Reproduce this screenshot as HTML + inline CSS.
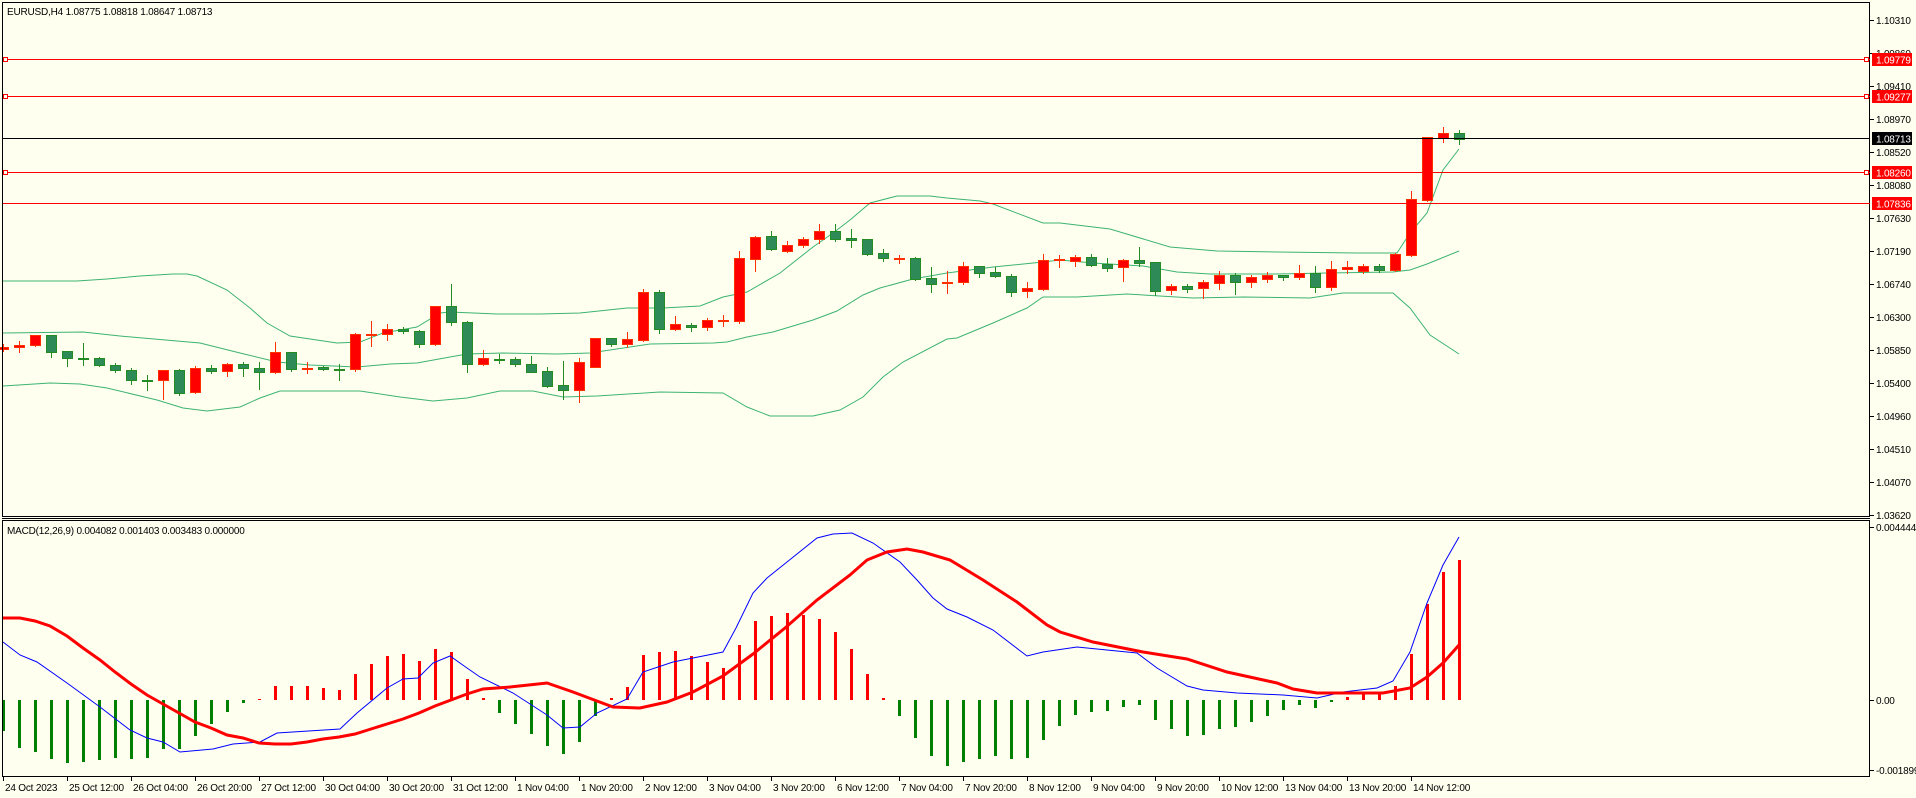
<!DOCTYPE html>
<html><head><meta charset="utf-8"><style>
html,body{margin:0;padding:0;background:#fffff0;}
svg{display:block;font-family:"Liberation Sans",Arial,sans-serif;font-size:10px;letter-spacing:-0.2px;}
</style></head><body>
<svg id="s" width="1916" height="798" viewBox="0 0 1916 798" xmlns="http://www.w3.org/2000/svg">
<rect width="1916" height="798" fill="#fffff0"/>
<g id="g"></g>
<rect x="2.5" y="2.5" width="1867" height="514" fill="none" stroke="#000"/>
<line x1="2" y1="518.5" x2="1870" y2="518.5" stroke="#000"/>
<rect x="2.5" y="520.5" width="1867" height="256" fill="none" stroke="#000"/>
<line x1="3" y1="59.5" x2="1870" y2="59.5" stroke="#f00"/>
<line x1="3" y1="96.5" x2="1870" y2="96.5" stroke="#f00"/>
<line x1="3" y1="138.5" x2="1870" y2="138.5" stroke="#000"/>
<line x1="3" y1="172.5" x2="1870" y2="172.5" stroke="#f00"/>
<line x1="3" y1="203.5" x2="1870" y2="203.5" stroke="#f00"/>
<g fill="#fffff0" stroke="#f00">
<rect x="3.5" y="57.5" width="4" height="4"/><rect x="1864.5" y="57.5" width="4" height="4"/>
<rect x="3.5" y="94.5" width="4" height="4"/><rect x="1864.5" y="94.5" width="4" height="4"/>
<rect x="3.5" y="170.5" width="4" height="4"/><rect x="1864.5" y="170.5" width="4" height="4"/>
</g>
<text x="7" y="15" fill="#000">EURUSD,H4  1.08775 1.08818 1.08647 1.08713</text>
<text x="7" y="534" fill="#000">MACD(12,26,9) 0.004082 0.001403 0.003483 0.000000</text>
<g id="yl" fill="#000">
<text x="1876" y="24">1.10310</text>
<text x="1876" y="57">1.09860</text>
<text x="1876" y="90">1.09410</text>
<text x="1876" y="123">1.08970</text>
<text x="1876" y="156">1.08520</text>
<text x="1876" y="189">1.08080</text>
<text x="1876" y="222">1.07630</text>
<text x="1876" y="255">1.07190</text>
<text x="1876" y="288">1.06740</text>
<text x="1876" y="321">1.06300</text>
<text x="1876" y="354">1.05850</text>
<text x="1876" y="387">1.05400</text>
<text x="1876" y="420">1.04960</text>
<text x="1876" y="453">1.04510</text>
<text x="1876" y="486">1.04070</text>
<text x="1876" y="519">1.03620</text>
</g>
<rect x="1872" y="53" width="40" height="13" fill="#f00"/><text x="1876" y="63.5" fill="#fff">1.09779</text>
<rect x="1872" y="90" width="40" height="13" fill="#f00"/><text x="1876" y="100.5" fill="#fff">1.09277</text>
<rect x="1872" y="132" width="40" height="13" fill="#000"/><text x="1876" y="142.5" fill="#fff">1.08713</text>
<rect x="1872" y="166" width="40" height="13" fill="#f00"/><text x="1876" y="176.5" fill="#fff">1.08260</text>
<rect x="1872" y="197" width="40" height="13" fill="#f00"/><text x="1876" y="207.5" fill="#fff">1.07836</text>
<line x1="1870" y1="527.5" x2="1874" y2="527.5" stroke="#000"/><text x="1876" y="531">0.004444</text>
<line x1="1870" y1="700.5" x2="1874" y2="700.5" stroke="#000"/><text x="1876" y="704">0.00</text>
<line x1="1870" y1="770.5" x2="1874" y2="770.5" stroke="#000"/><text x="1876" y="774">-0.001899</text>
<g fill="#000">
<text x="5" y="791">24 Oct 2023</text>
<text x="69" y="791">25 Oct 12:00</text>
<text x="133" y="791">26 Oct 04:00</text>
<text x="197" y="791">26 Oct 20:00</text>
<text x="261" y="791">27 Oct 12:00</text>
<text x="325" y="791">30 Oct 04:00</text>
<text x="389" y="791">30 Oct 20:00</text>
<text x="453" y="791">31 Oct 12:00</text>
<text x="517" y="791">1 Nov 04:00</text>
<text x="581" y="791">1 Nov 20:00</text>
<text x="645" y="791">2 Nov 12:00</text>
<text x="709" y="791">3 Nov 04:00</text>
<text x="773" y="791">3 Nov 20:00</text>
<text x="837" y="791">6 Nov 12:00</text>
<text x="901" y="791">7 Nov 04:00</text>
<text x="965" y="791">7 Nov 20:00</text>
<text x="1029" y="791">8 Nov 12:00</text>
<text x="1093" y="791">9 Nov 04:00</text>
<text x="1157" y="791">9 Nov 20:00</text>
<text x="1221" y="791">10 Nov 12:00</text>
<text x="1285" y="791">13 Nov 04:00</text>
<text x="1349" y="791">13 Nov 20:00</text>
<text x="1413" y="791">14 Nov 12:00</text>
</g>
</svg>
<script>
(function(){
var NS="http://www.w3.org/2000/svg",g=document.getElementById("g");
function el(n,a){var e=document.createElementNS(NS,n);for(var k in a)e.setAttribute(k,a[k]);g.appendChild(e);return e;}
function pl(pts,st,w){el("polyline",{points:pts.map(function(p){return p[0]+","+p[1]}).join(" "),fill:"none",stroke:st,"stroke-width":w});}
for(var k=0;k<16;k++){el("line",{x1:1870,x2:1874,y1:20.5+33*k,y2:20.5+33*k,stroke:"#000"});}
for(var k=0;k<23;k++){var x=3.5+64*k;el("line",{x1:x,x2:x,y1:777,y2:781,stroke:"#000"});}
pl([[3,281],[77,281],[107,279],[140,276],[173,274],[187,274],[197,276],[227,290],[250,308],[267,323],[290,336],[337,343],[360,342],[383,333],[417,327],[440,313],[450,312],[497,314],[540,314],[580,313],[627,308],[633,308],[663,308],[700,306],[723,297],[747,292],[780,273],[813,247],[833,233],[850,220],[870,203],[897,196],[930,196],[947,198],[980,201],[993,204],[1043,223],[1060,223],[1110,229],[1170,247],[1217,251],[1277,252],[1357,253],[1397,253],[1410,233],[1427,213],[1443,170],[1459,149]],"#3cb371",1);
pl([[3,333],[83,332],[120,336],[177,341],[200,343],[240,353],[277,362],[310,365],[357,367],[390,364],[417,363],[450,357],[467,354],[503,353],[557,354],[590,353],[650,344],[713,343],[727,342],[747,337],[773,332],[813,320],[837,311],[863,295],[880,288],[913,279],[947,273],[993,267],[1043,262],[1060,260],[1093,263],[1143,266],[1177,272],[1210,274],[1277,274],[1327,273],[1393,272],[1410,270],[1427,264],[1459,251]],"#3cb371",1);
pl([[3,386],[50,383],[80,384],[107,388],[157,400],[183,408],[207,411],[240,407],[260,398],[280,391],[360,391],[400,397],[433,401],[467,398],[500,391],[533,391],[563,397],[597,396],[660,392],[723,393],[747,407],[770,416],[813,416],[840,410],[863,397],[883,377],[903,362],[947,339],[957,338],[993,323],[1027,308],[1043,297],[1077,297],[1127,294],[1193,298],[1243,297],[1310,298],[1343,293],[1393,293],[1410,308],[1430,335],[1459,354]],"#3cb371",1);
var A="r 502 508 492 512|r 496 501 483 515|r 466 496 466 499|g 466 515 466 530|g 514 535 514 557|g 535 536 489 554|g 535 556 531 559|g 556 571 549 575|g 571 601 565 611|g 600 602 586 629|r 571 601 571 656|g 571 640 568 646|r 565 637 558 640|g 565 574 556 578|r 552 574 549 587|g 552 565 546 587|g 565 577 546 626|r 517 577 486 580|g 517 568 517 574|r 563 565 546 580|g 562 568 558 571|g 567 569 552 599|r 463 568 459 572|r 463 466 423 499|r 448 463 432 479|g 448 454 441 460|g 454 493 450 502|r 379 493 379 496|g 379 427 312 434|g 427 553 424 575|r 535 553 511 556|g 536 539 522 550|g 538 553 531 557|g 553 575 528 575|g 574 617 562 620|g 616 629 543 656|r 547 629 534 665|r 475 562 475 562|g 475 491 475 497|r 478 491 457 500|r 337 479 327 482|g 337 446 330 458|r 433 446 408 449|g 436 440 430 452|r 421 440 414 449|r 420 422 405 437|r 235 422 213 428|r 172 238 168 272|g 169 206 153 209|r 195 212 184 215|r 178 196 172 200|r 154 178 132 188|g 154 176 132 182|g 175 179 147 200|g 178 221 178 224|g 220 235 208 242|r 235 237 226 248|g 235 297 232 300|g 295 311 261 335|r 307 310 272 338";
var B="r 439 487 426 491|g 439 458 439 470|g 457 469 440 470|g 468 515 462 527|r 505 514 487 530|r 421 506 402 510|r 418 420 405 440|r 412 422 405 437|g 412 434 402 437|g 432 443 414 452|r 421 442 417 482|g 421 428 381 438|g 427 512 427 525|r 499 511 492 521|g 499 506 492 515|r 487 505 480 535|r 464 488 452 506|g 464 485 460 521|r 472 485 465 500|r 465 476 457 486|g 465 470 465 479|r 460 470 435 476|g 460 500 438 515|r 448 500 423 510|r 441 446 423 460|r 438 452 432 459|g 438 449 432 457|r 403 449 400 453|r 238 404 213 407|r 52 239 52 242|r 40 53 21 66|g 40 56 30 72";
var list=[];A.split("|").forEach(function(s){list.push([s,180]);});B.split("|").forEach(function(s){list.push([s,120]);});
list.forEach(function(it,i){var p=it[0].split(" "),o=it[1],c=p[0];
 var bt=Math.round(o+(+p[1])/3),bb=Math.round(o+(+p[2])/3),wt=Math.round(o+(+p[3])/3),wb=Math.round(o+(+p[4])/3);
 var x=3+16*i,st=c=="r"?"#ff3000":"#228b22",fi=c=="r"?"#ff0000":"#2e8b57";
 el("line",{x1:x+0.5,x2:x+0.5,y1:wt,y2:wb+1,stroke:st});
 if(bb-bt<2){el("rect",{x:x-5,y:bt,width:11,height:Math.max(1,bb-bt)+1,fill:st});}
 else el("rect",{x:x-4.5,y:bt+0.5,width:10,height:bb-bt,fill:fi,stroke:st});
});
var H=[731,748,752,759,763,762,760,758,759,758,749,749,736,724,712,703,699,686,686,686,688,690,674,664,656,654,661,649,652,679,698,713,724,734,746,754,742,716,698,687,655,652,651,656,662,668,645,621,616,613,615,619,632,649,674,698,716,738,756,766,762,759,756,759,758,740,726,715,712,711,707,705,720,729,736,735,729,727,722,716,710,705,708,702,697,694,693,686,654,604,572,560];
H.forEach(function(v,i){var x=3+16*i;if(v<700){el("rect",{x:x-1,y:v,width:3,height:700-v,fill:"#f00"});}else{el("rect",{x:x-1,y:700,width:3,height:v-700,fill:"#008000"});}});
pl([[3,642],[20,655],[37,662],[67,683],[100,707],[130,730],[147,738],[163,742],[180,752],[213,749],[233,744],[260,742],[277,733],[340,729],[357,713],[387,688],[403,679],[418,678],[433,663],[450,656],[467,668],[480,677],[513,693],[547,715],[563,728],[580,727],[597,713],[627,699],[643,672],[673,662],[723,652],[736,628],[753,593],[767,578],[787,562],[817,538],[833,534],[852,533],[873,543],[900,562],[917,580],[933,598],[947,609],[967,617],[993,630],[1027,656],[1043,652],[1077,647],[1137,653],[1157,668],[1187,686],[1203,690],[1237,693],[1283,695],[1317,698],[1343,692],[1377,688],[1393,681],[1410,652],[1427,603],[1443,565],[1459,537]],"#0000ff",1);
pl([[3,618],[20,618],[35,621],[50,626],[67,636],[83,648],[100,660],[115,672],[131,684],[147,695],[163,704],[179,713],[195,722],[211,728],[227,735],[243,738],[259,743],[275,744],[291,744],[307,742],[323,739],[339,737],[355,734],[371,729],[387,724],[403,719],[419,713],[435,706],[451,700],[467,694],[483,689],[510,687],[547,683],[573,692],[613,707],[640,708],[667,702],[693,692],[723,676],[753,654],[785,628],[817,600],[850,575],[867,560],[887,552],[907,549],[923,552],[950,560],[983,580],[1017,602],[1047,625],[1060,632],[1093,642],[1143,652],[1187,659],[1227,672],[1277,683],[1293,689],[1317,693],[1383,693],[1410,688],[1427,677],[1443,663],[1459,645]],"#ff0000",3);
})();
</script>
</body></html>
